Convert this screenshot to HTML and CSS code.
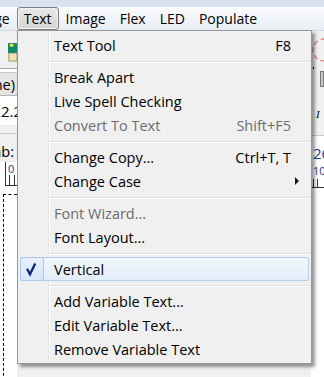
FILE: index.html
```html
<!DOCTYPE html>
<html lang="en">
<head>
    <meta charset="UTF-8">
    <title>Text menu</title>
    <link rel="stylesheet" href="styles.css">
</head>
<body>
<div class="screen">
    <div class="titlebar"></div>

    <div class="menubar">
        <span class="mb-item first">Page</span>
        <span class="mb-item open">Text</span>
        <span class="mb-item">Image</span>
        <span class="mb-item">Flex</span>
        <span class="mb-item">LED</span>
        <span class="mb-item">Populate</span>
    </div>

    <div class="workspace">
        <div class="side left">
            <div class="band toolbar">
                <svg class="pic" width="10" height="21" viewBox="0 0 10 21">
                    <rect x="1" y="11" width="9" height="9" fill="#efe2b4" stroke="#9a8f6a"/>
                    <rect x="0" y="0" width="10" height="11" fill="#0f8a66"/>
                    <rect x="2" y="1" width="4" height="3" fill="#f2e640"/>
                </svg>
            </div>
            <div class="band combo"><span class="txt">(None)</span></div>
            <div class="band field"><span class="txt">122.2</span></div>
            <div class="band gap"></div>
            <div class="band tab"><span class="txt">Tab:</span></div>
            <div class="band ruler">
                <span class="num">0</span>
                <span class="tick t1"></span>
                <span class="tick t2"></span>
            </div>
            <div class="canvas"><div class="frame"></div></div>
        </div>

        <div class="middle"></div>

        <div class="side right">
            <div class="band toolbar">
                <svg class="circle" width="13" height="24" viewBox="0 0 13 24">
                    <circle cx="13" cy="12" r="11" fill="none" stroke="#e08a8a" stroke-width="1.5" stroke-dasharray="5 3"/>
                </svg>
            </div>
            <div class="band r-combo"><span class="dash"></span><span class="btn"></span></div>
            <div class="band r-field"><span class="ital">I</span></div>
            <div class="band tab"><span class="num26">26</span></div>
            <div class="band ruler">
                <span class="num">10</span>
                <span class="tick t1"></span>
                <span class="tick t2"></span>
            </div>
            <div class="canvas"><div class="frame r"></div></div>
        </div>
    </div>

    <div class="menu">
        <div class="item"><span class="icon"></span><span class="label">Text Tool</span><span class="key">F8</span></div>
        <div class="sep"></div>
        <div class="item"><span class="icon"></span><span class="label">Break Apart</span></div>
        <div class="item"><span class="icon"></span><span class="label">Live Spell Checking</span></div>
        <div class="item off"><span class="icon"></span><span class="label">Convert To Text</span><span class="key">Shift+F5</span></div>
        <div class="sep"></div>
        <div class="item"><span class="icon"></span><span class="label">Change Copy...</span><span class="key">Ctrl+T, T</span></div>
        <div class="item sub"><span class="icon"></span><span class="label">Change Case</span><span class="arrow"></span></div>
        <div class="sep"></div>
        <div class="item off"><span class="icon"></span><span class="label">Font Wizard...</span></div>
        <div class="item"><span class="icon"></span><span class="label">Font Layout...</span></div>
        <div class="sep"></div>
        <div class="item hot">
            <span class="icon check">
                <svg width="24" height="24" viewBox="0 0 24 24">
                    <path d="M7 11.8 L10 17.2 L15.2 6.4" fill="none" stroke="#10227a" stroke-width="2.3" stroke-linejoin="miter"/>
                </svg>
            </span>
            <span class="label">Vertical</span>
        </div>
        <div class="sep"></div>
        <div class="item"><span class="icon"></span><span class="label">Add Variable Text...</span></div>
        <div class="item"><span class="icon"></span><span class="label">Edit Variable Text...</span></div>
        <div class="item"><span class="icon"></span><span class="label">Remove Variable Text</span></div>
    </div>
</div>
</body>
</html>
```

FILE: styles.css
```css
body {
    margin: 0;
    font-family: "Open Sans", "Noto Sans", sans-serif;
    font-size: 14.5px;
    color: #000;
    background: #fff;
}
.screen {
    position: relative;
    width: 324px;
    height: 377px;
    overflow: hidden;
    display: flex;
    flex-direction: column;
}
.titlebar {
    flex: none;
    height: 7px;
    background: #d8e3f0;
}

/* menu bar */
.menubar {
    flex: none;
    height: 23px;
    display: flex;
    align-items: stretch;
    font-size: 14px;
    background: linear-gradient(#fbfcfe, #e9eef6);
    border-bottom: 1px solid #cfd6de;
    white-space: nowrap;
}
.mb-item {
    display: flex;
    align-items: center;
    padding: 0 6px 0 6px;
    border: 1px solid transparent;
    border-radius: 3px;
}
.mb-item.first {
    margin-left: -29px;
}
.mb-item.open {
    background: linear-gradient(#e9e9e9, #d4d4d4);
    border-color: #7f7f7f;
    box-shadow: inset 0 0 0 1px #f2f2f2;
}

/* window behind the menu */
.workspace {
    flex: 1;
    min-height: 0;
    display: flex;
}
.middle {
    flex: 1;
    background: #f0f0f0;
}
.side {
    flex: none;
    display: flex;
    flex-direction: column;
    overflow: hidden;
    white-space: nowrap;
}
.side.left {
    width: 17px;
}
.side.right {
    width: 13px;
}
.band {
    flex: none;
    position: relative;
    display: flex;
    align-items: center;
    background: #f0f0f0;
}
.toolbar {
    height: 37px;
    border-bottom: 1px solid #a8a8a8;
}
.pic {
    margin: 6px 0 0 8px;
}
.combo {
    height: 22px;
    margin-top: 3px;
    background: #e4e4e4;
    border-top: 1px solid #c8c8c8;
    border-bottom: 1px solid #b5b5b5;
    justify-content: flex-end;
}
.field {
    height: 28px;
    background: #fff;
    justify-content: flex-end;
    margin-top: 1px;
}
.gap {
    height: 8px;
    border-bottom: 1px solid #c9c9c9;
}
.tab {
    height: 27px;
    align-items: flex-end;
    padding-bottom: 1px;
    justify-content: flex-end;
}
.txt {
    margin-right: 2px;
}
.field .txt {
    margin-right: -5px;
    font-size: 15px;
}
.tab .txt {
    margin-right: 3px;
}
.ruler {
    height: 23px;
    background: #fff;
    border-bottom: 1px solid #333;
    align-items: flex-start;
}
.ruler .num {
    font-size: 11px;
    line-height: 12px;
    color: #1d3c8c;
    margin-left: 8px;
    margin-top: 1px;
}
.left .ruler {
    border-left: 1px solid #333;
    margin-left: 5px;
}
.left .ruler .num {
    margin-left: 2px;
}
.tick {
    position: absolute;
    bottom: 0;
    width: 1px;
    height: 10px;
    background: #333;
}
.left .t1 { left: 3px; }
.left .t2 { left: 8px; }
.right .ruler .num { margin-left: 2px; }
.right .t1 { left: 2px; height: 8px; }
.right .t2 { left: 6px; height: 8px; }
.canvas {
    flex: 1;
    min-height: 0;
    background: #fff;
}
.frame {
    margin: 8px 0 0 3px;
    height: 300px;
    border-top: 1px dashed #000;
    border-left: 1px dashed #000;
}
.frame.r {
    margin: -3px 0 0 2px;
    border-left: none;
}
.r-combo {
    height: 28px;
    margin-top: -4px;
    align-items: flex-start;
}
.dash {
    width: 3px;
    height: 2px;
    background: #000;
    margin: 2px 0 0 2px;
}
.btn {
    width: 4px;
    height: 14px;
    background: #c8c8c8;
    border: 1px solid #777;
    margin: 6px 0 0 6px;
}
.r-field {
    height: 42px;
    border-bottom: 1px solid #c9c9c9;
}
.ital {
    font-family: "Liberation Serif", serif;
    font-style: italic;
    font-size: 11px;
    margin-left: 5px;
}
.num26 {
    margin-left: 2px;
    color: #1c3f94;
    font-size: 15px;
}
.right .tab {
    justify-content: flex-start;
    background: #fff;
}

/* dropdown */
.menu {
    position: absolute;
    left: 17px;
    top: 30px;
    width: 289px;
    padding: 2px;
    border: 1px solid #979797;
    background:
        linear-gradient(to right, transparent 30px, #e2e3e3 30px, #e2e3e3 31px, #fff 31px, #fff 32px, transparent 32px),
        #f0f0f0;
    box-shadow: 3px 3px 3px rgba(0, 0, 0, 0.4);
}
.item {
    display: flex;
    align-items: center;
    height: 24px;
    padding-right: 18px;
    white-space: nowrap;
}
.icon {
    width: 24px;
    height: 24px;
    margin-right: 10px;
    flex: none;
}
.label {
    flex: 1;
}
.key {
    margin-left: 20px;
}
.item.off {
    color: #6d6d6d;
}
.item.sub {
    padding-right: 10px;
}
.arrow {
    width: 0;
    height: 0;
    border-top: 4px solid transparent;
    border-bottom: 4px solid transparent;
    border-left: 4px solid #1a1a1a;
}
.item.hot {
    border-radius: 3px;
    background: linear-gradient(#f2f7fd, #e2ecf9);
    box-shadow: inset 0 0 0 1px #b2d0f5;
}
.check {
    border-radius: 3px;
    background: linear-gradient(#e8f1fc, #d8e6f8);
    box-shadow: inset 0 0 0 1px #a9c8ef;
}
.check svg {
    display: block;
}
.sep {
    height: 8px;
    margin-left: 28px;
    background: linear-gradient(transparent 4px, #e0e0e0 4px, #e0e0e0 5px, #fff 5px, #fff 6px, transparent 6px);
}
```
